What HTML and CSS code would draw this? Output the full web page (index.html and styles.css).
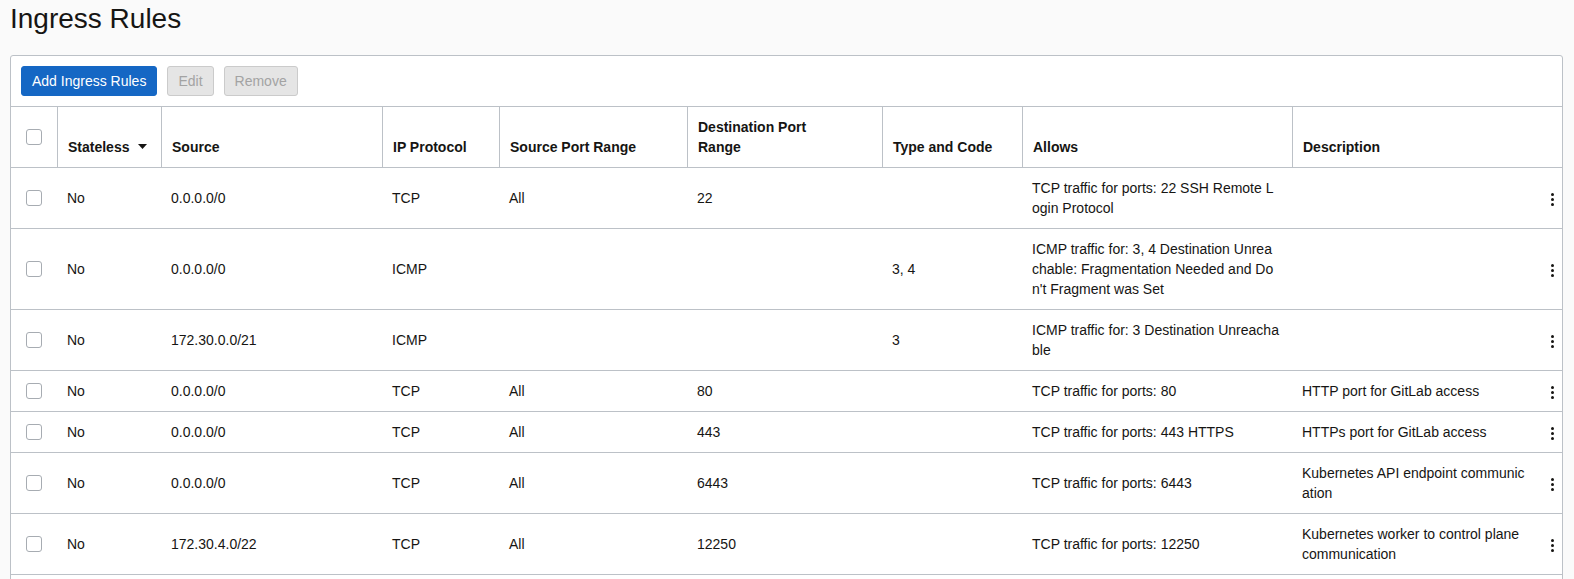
FILE: index.html
```html
<!DOCTYPE html>
<html lang="en">
<head>
<meta charset="utf-8">
<title>Ingress Rules</title>
<link rel="stylesheet" href="styles.css">
</head>
<body>
<h1 class="page-title">Ingress Rules</h1>
<section class="card">
  <div class="toolbar">
    <button class="btn btn-primary" type="button">Add Ingress Rules</button>
    <button class="btn btn-disabled" type="button" disabled>Edit</button>
    <button class="btn btn-disabled" type="button" disabled>Remove</button>
  </div>
  <table class="rules">
    <colgroup>
      <col class="c-cb"><col class="c-stateless"><col class="c-source"><col class="c-proto"><col class="c-spr"><col class="c-dpr"><col class="c-type"><col class="c-allows"><col class="c-desc"><col class="c-menu">
    </colgroup>
    <thead>
      <tr>
        <th class="cb-cell"><span class="checkbox"></span></th>
        <th>Stateless <svg class="sort" width="9" height="5" viewBox="0 0 9 5"><path d="M0 0h9L4.5 5z" fill="#161513"/></svg></th>
        <th>Source</th>
        <th>IP Protocol</th>
        <th>Source Port Range</th>
        <th>Destination Port<br>Range</th>
        <th>Type and Code</th>
        <th>Allows</th>
        <th>Description</th>
        <th class="menu-cell"></th>
      </tr>
    </thead>
    <tbody>
      <tr>
        <td class="cb-cell"><span class="checkbox"></span></td>
        <td>No</td><td>0.0.0.0/0</td><td>TCP</td><td>All</td><td>22</td><td></td>
        <td>TCP traffic for ports: 22 SSH Remote L<br>ogin Protocol</td>
        <td></td>
        <td class="menu-cell"><span class="kebab"><i></i><i></i><i></i></span></td>
      </tr>
      <tr>
        <td class="cb-cell"><span class="checkbox"></span></td>
        <td>No</td><td>0.0.0.0/0</td><td>ICMP</td><td></td><td></td><td>3, 4</td>
        <td>ICMP traffic for: 3, 4 Destination Unrea<br>chable: Fragmentation Needed and Do<br>n't Fragment was Set</td>
        <td></td>
        <td class="menu-cell"><span class="kebab"><i></i><i></i><i></i></span></td>
      </tr>
      <tr>
        <td class="cb-cell"><span class="checkbox"></span></td>
        <td>No</td><td>172.30.0.0/21</td><td>ICMP</td><td></td><td></td><td>3</td>
        <td>ICMP traffic for: 3 Destination Unreacha<br>ble</td>
        <td></td>
        <td class="menu-cell"><span class="kebab"><i></i><i></i><i></i></span></td>
      </tr>
      <tr>
        <td class="cb-cell"><span class="checkbox"></span></td>
        <td>No</td><td>0.0.0.0/0</td><td>TCP</td><td>All</td><td>80</td><td></td>
        <td>TCP traffic for ports: 80</td>
        <td>HTTP port for GitLab access</td>
        <td class="menu-cell"><span class="kebab"><i></i><i></i><i></i></span></td>
      </tr>
      <tr>
        <td class="cb-cell"><span class="checkbox"></span></td>
        <td>No</td><td>0.0.0.0/0</td><td>TCP</td><td>All</td><td>443</td><td></td>
        <td>TCP traffic for ports: 443 HTTPS</td>
        <td>HTTPs port for GitLab access</td>
        <td class="menu-cell"><span class="kebab"><i></i><i></i><i></i></span></td>
      </tr>
      <tr>
        <td class="cb-cell"><span class="checkbox"></span></td>
        <td>No</td><td>0.0.0.0/0</td><td>TCP</td><td>All</td><td>6443</td><td></td>
        <td>TCP traffic for ports: 6443</td>
        <td>Kubernetes API endpoint communic<br>ation</td>
        <td class="menu-cell"><span class="kebab"><i></i><i></i><i></i></span></td>
      </tr>
      <tr>
        <td class="cb-cell"><span class="checkbox"></span></td>
        <td>No</td><td>172.30.4.0/22</td><td>TCP</td><td>All</td><td>12250</td><td></td>
        <td>TCP traffic for ports: 12250</td>
        <td>Kubernetes worker to control plane<br>communication</td>
        <td class="menu-cell"><span class="kebab"><i></i><i></i><i></i></span></td>
      </tr>
    </tbody>
  </table>
  <div class="table-tail"></div>
</section>
</body>
</html>
```
FILE: styles.css
```css
html, body {
  overflow: hidden;
}
body {
  margin: 0;
  padding: 0 11px 0 10px;
  background: #fafafa;
  color: #161513;
  font-family: "Liberation Sans", Arial, Helvetica, sans-serif;
  font-size: 14px;
  line-height: 20px;
}
.page-title {
  margin: 2px 0 19px;
  font-size: 28px;
  line-height: 34px;
  font-weight: normal;
  color: #161513;
}
.card {
  background: #fff;
  border: 1px solid #bcc1c7;
  border-radius: 3px 3px 0 0;
}
.toolbar {
  display: flex;
  gap: 10px;
  padding: 10px;
  border-bottom: 1px solid #bcc1c7;
}
.btn {
  height: 30px;
  padding: 0 10px;
  border: 1px solid;
  border-radius: 3px;
  font-family: inherit;
  font-size: 14px;
  line-height: 28px;
}
.btn-primary {
  background: #1567c4;
  border-color: #1567c4;
  color: #fff;
}
.btn-disabled {
  background: #e5e5e5;
  border-color: #cbcbcb;
  color: #a3a3a3;
}
.rules {
  width: 100%;
  table-layout: fixed;
  border-collapse: separate;
  border-spacing: 0;
}
.c-cb { width: 46px; }
.c-stateless { width: 104px; }
.c-source { width: 221px; }
.c-proto { width: 117px; }
.c-spr { width: 188px; }
.c-dpr { width: 195px; }
.c-type { width: 140px; }
.c-allows { width: 270px; }
.c-desc { width: 246px; }
.c-menu { width: 24px; }
.rules th,
.rules td {
  padding: 10px;
  text-align: left;
  border-bottom: 1px solid #bcc1c7;
  white-space: nowrap;
  overflow: hidden;
}
.rules th {
  font-weight: bold;
  vertical-align: bottom;
}
.rules th + th {
  border-left: 1px solid #bcc1c7;
}
.rules th.menu-cell {
  border-left: none;
}
.rules td {
  vertical-align: middle;
}
.rules .cb-cell {
  padding: 0 0 0 15px;
  vertical-align: middle;
}
.rules .menu-cell {
  padding: 0 0 0 4px;
  text-align: center;
}
.table-tail {
  height: 40px;
}
.checkbox {
  display: block;
  width: 16px;
  height: 16px;
  box-sizing: border-box;
  border: 1px solid #a7acb2;
  border-radius: 3px;
  background: #fff;
}
.sort {
  margin-left: 5px;
  vertical-align: 3px;
}
.kebab {
  display: inline-flex;
  flex-direction: column;
  gap: 2px;
  vertical-align: middle;
}
.kebab i {
  display: block;
  width: 3px;
  height: 3px;
  border-radius: 50%;
  background: #161513;
}
```
